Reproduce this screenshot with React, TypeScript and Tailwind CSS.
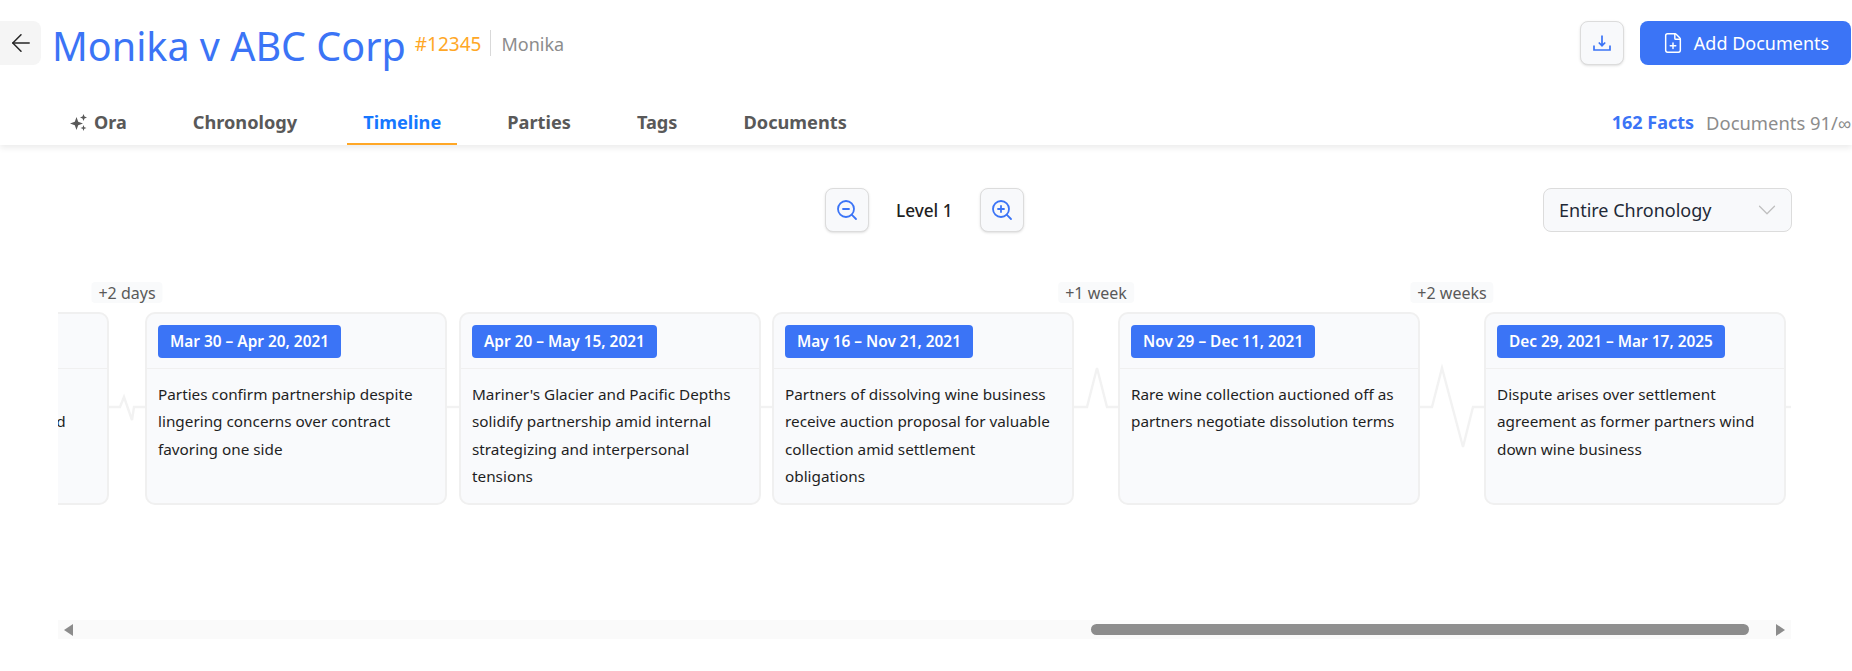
import * as React from "react";
import { ArrowLeft, ChevronDown, FilePlus, ZoomIn, ZoomOut } from "lucide-react";

const tabs = ["Chronology", "Timeline", "Parties", "Tags", "Documents"];

const Pulse = ({ width, points }: { width: number; points: string }) => (
  <svg width={width} height="192" viewBox={`0 0 ${width} 192`} fill="none" className="block">
    <polyline points={points} stroke="#f2f2f2" strokeWidth="2.4" />
  </svg>
);

const Gap = ({ width, points, label }: { width: number; points: string; label?: string }) => (
  <div className="relative shrink-0" style={{ width }}>
    {label && (
      <div className="absolute left-1/2 top-[-30px] -translate-x-1/2 whitespace-nowrap rounded bg-[#f9fafb] px-[7px] h-[21px] flex items-center text-[16px] text-[#595959]">
        {label}
      </div>
    )}
    <Pulse width={width} points={points} />
  </div>
);

const Card = ({ date, lines, width = 302 }: { date: string; lines: string[]; width?: number }) => (
  <div
    className="h-[193px] shrink-0 rounded-[10px] border-2 border-[#f0f0f0] bg-[#f9fafc]"
    style={{ width }}
  >
    <div className="h-[55px] border-b border-[#f0f0f0] pl-[11px] pt-[11px]">
      <span className="inline-flex h-[33px] items-center rounded bg-[#3b74f6] px-3 text-[15.4px] font-semibold text-white">
        {date}
      </span>
    </div>
    <div className="pl-[11px] pt-3 text-[15.3px] leading-[27.4px] text-[#1f1f1f]">
      {lines.map((line, i) => (
        <div key={i} className="whitespace-nowrap">
          {line}
        </div>
      ))}
    </div>
  </div>
);

export default function App() {
  return (
    <div className="h-[671px] w-[1852px] overflow-hidden bg-white font-['Noto_Sans',sans-serif]">
      <header className="h-[145px] shadow-[0_3px_6px_rgba(0,0,0,0.08)]">
        <div className="flex items-center justify-between pt-[21px] pr-px">
          <div className="flex items-center">
            <button className="flex h-[44px] w-[41px] items-center justify-center rounded-r-lg bg-[#f5f5f5]">
              <ArrowLeft size={28} color="#262626" strokeWidth={1.3} />
            </button>
            <h1 className="ml-[11px] translate-y-[3px] text-[39.5px] leading-[44px] text-[#3b74f6]">Monika v ABC Corp</h1>
            <span className="ml-[9px] mt-[2px] text-[19px] text-[#ffa726]">#12345</span>
            <span className="ml-[9px] h-[26px] w-px bg-[#d9d9d9]" />
            <span className="ml-[10px] mt-[2px] text-[18px] text-[#8c8c8c]">Monika</span>
          </div>
          <div className="flex items-center gap-4">
            <button className="flex h-[44px] w-[44px] items-center justify-center rounded-lg border border-[#dcdcdc] bg-[#f8f9fb] shadow-sm">
              <svg width="18" height="18" viewBox="0 0 18 18" fill="none" stroke="#3b74f6" strokeWidth="1.7">
                <path d="M9 1.500v10M5.800 8.500 9 11.700l3.200-3.200M1 11.500v4.500h16v-4.500" />
              </svg>
            </button>
            <button className="flex h-[44px] w-[211px] items-center justify-center gap-[10px] rounded-lg bg-[#3b74f6] text-[18px] text-white">
              <FilePlus size={22} strokeWidth={1.6} />
              Add Documents
            </button>
          </div>
        </div>
        <div className="mt-[35px] flex items-center justify-between pr-px">
          <nav className="ml-[54px] flex gap-[34px]">
            <a className="flex h-[45px] items-center gap-[6px] border-b-2 border-transparent px-4 pt-[2px] text-[18px] font-bold text-[#595959]">
              <svg width="18" height="18" viewBox="0 0 18 18" fill="#595959">
                <path d="M6.500 3 8.200 7.800 13 9.500 8.200 11.200 6.500 16 4.800 11.200 0 9.500 4.800 7.800z" />
                <path d="M13.500 0l1 2.500 2.500 1-2.500 1-1 2.500-1-2.500-2.500-1 2.500-1z" />
                <path d="M13.500 11l.8 2.200 2.200.8-2.200.8-.8 2.200-.8-2.200-2.200-.8 2.200-.8z" />
              </svg>
              Ora
            </a>
            {tabs.map((tab) => (
              <a
                key={tab}
                className={
                  tab === "Timeline"
                    ? "flex h-[45px] items-center border-b-2 border-[#ffa726] px-4 pt-[2px] text-[18.2px] font-bold text-[#1677ff]"
                    : "flex h-[45px] items-center border-b-2 border-transparent px-4 pt-[2px] text-[18.2px] font-bold text-[#595959]"
                }
              >
                {tab}
              </a>
            ))}
          </nav>
          <div className="flex items-center gap-3">
            <span className="text-[18px] font-bold text-[#3b74f6]">162 Facts</span>
            <span className="text-[18.4px] text-[#8c8c8c]">Documents 91/∞</span>
          </div>
        </div>
      </header>

      <div className="mt-[43px] flex items-center justify-between pl-[825px] pr-[60px]">
        <div className="flex items-center gap-[27px]">
          <button className="flex h-[44px] w-[44px] items-center justify-center rounded-lg border border-[#dcdcdc] bg-[#f8f9fb] shadow-sm">
            <ZoomOut size={24} color="#3b74f6" strokeWidth={1.8} />
          </button>
          <span className="mt-px text-[17.2px] font-medium text-[#1f1f1f]">Level 1</span>
          <button className="flex h-[44px] w-[44px] items-center justify-center rounded-lg border border-[#dcdcdc] bg-[#f8f9fb] shadow-sm">
            <ZoomIn size={24} color="#3b74f6" strokeWidth={1.8} />
          </button>
        </div>
        <div className="flex h-[44px] w-[249px] items-center justify-between rounded-lg border border-[#dcdcdc] bg-[#f8f9fb] pl-[15px] pr-[9px] text-[18px] text-[#1f2937]">
          <span className="mt-px">Entire Chronology</span>
          <ChevronDown size={30} color="#bfbfbf" strokeWidth={1} />
        </div>
      </div>

      <div className="ml-[58px] mt-[50px] flex w-[1733px] justify-end overflow-hidden pt-[30px]">
        <Card date="Mar 9 – Mar 28, 2021" lines={["\u00a0", "Owners debate terms of sales and"]} />
        <Gap width={36} label="+2 days" points="0,95 11,95 15,85 23,108 25,95 36,95" />
        <Card date="Mar 30 – Apr 20, 2021" lines={["Parties confirm partnership despite", "lingering concerns over contract", "favoring one side"]} />
        <Gap width={12} points="0,95 12,95" />
        <Card date="Apr 20 – May 15, 2021" lines={["Mariner's Glacier and Pacific Depths", "solidify partnership amid internal", "strategizing and interpersonal", "tensions"]} />
        <Gap width={11} points="0,95 11,95" />
        <Card date="May 16 – Nov 21, 2021" lines={["Partners of dissolving wine business", "receive auction proposal for valuable", "collection amid settlement", "obligations"]} />
        <Gap width={44} label="+1 week" points="0,95 13,95 23,56 33,95 44,95" />
        <Card date="Nov 29 – Dec 11, 2021" lines={["Rare wine collection auctioned off as", "partners negotiate dissolution terms"]} />
        <Gap width={64} label="+2 weeks" points="0,95 12,95 22,56 43,135 53,95 64,95" />
        <Card date="Dec 29, 2021 – Mar 17, 2025" lines={["Dispute arises over settlement", "agreement as former partners wind", "down wine business"]} />
        <Gap width={5} points="0,95 5,95" />
      </div>

      <div className="relative ml-[58px] mt-[115px] flex h-[19px] w-[1733px] items-center justify-between bg-[#fafafa] px-[6px]">
        <span className="h-0 w-0 border-y-[6px] border-r-[9px] border-y-transparent border-r-[#8c8c8c]" />
        <div className="absolute left-[1033px] top-[4px] h-[11px] w-[658px] rounded-full bg-[#8c8c8c]" />
        <span className="h-0 w-0 border-y-[6px] border-l-[9px] border-y-transparent border-l-[#8c8c8c]" />
      </div>
    </div>
  );
}
